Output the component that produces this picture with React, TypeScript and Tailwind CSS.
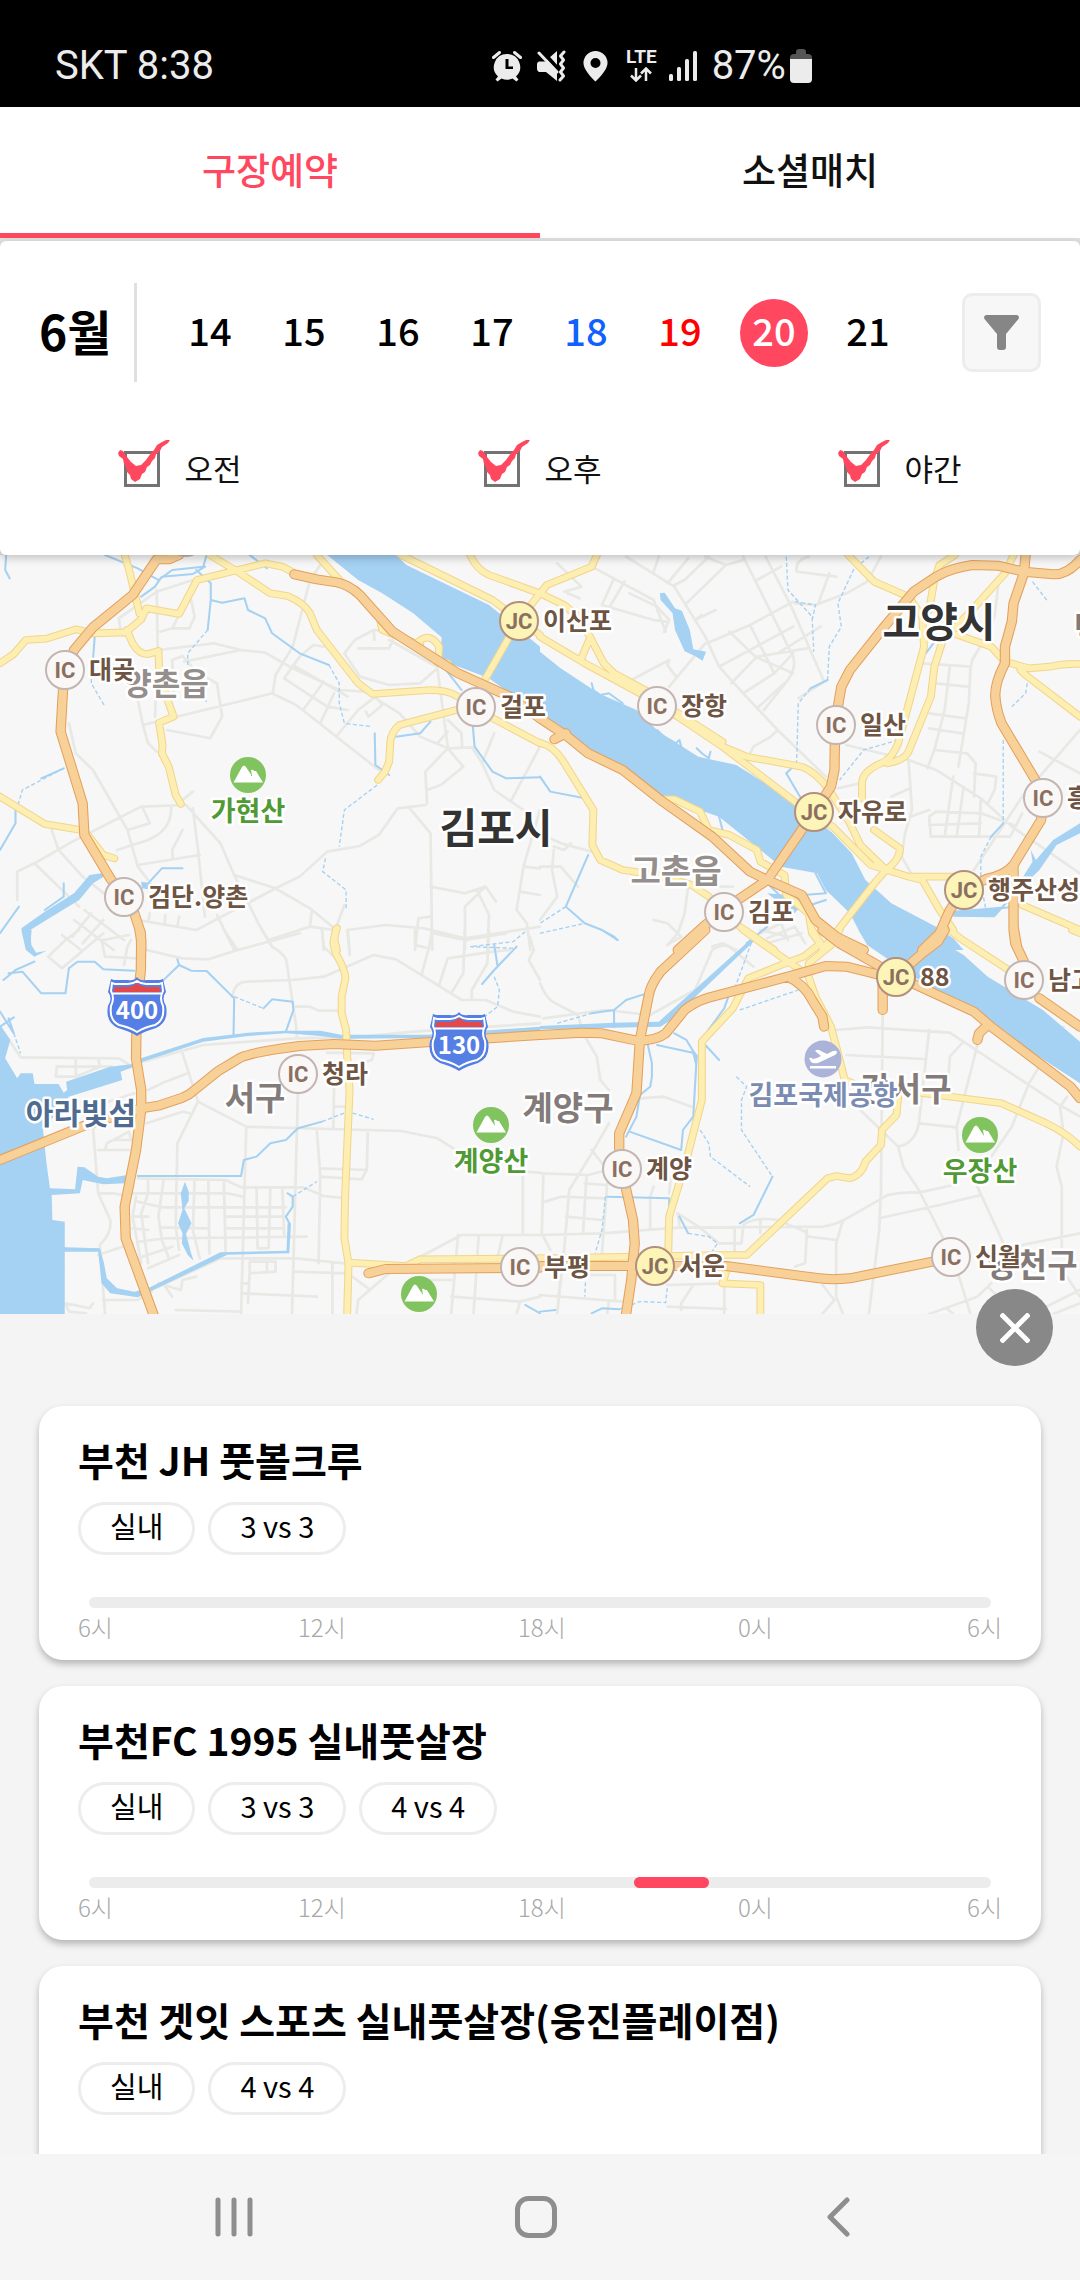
import { useState } from "react";

const dates = [
    { day: 14, color: "text-black" },
    { day: 15, color: "text-black" },
    { day: 16, color: "text-black" },
    { day: 17, color: "text-black" },
    { day: 18, color: "text-[#1161ff]" },
    { day: 19, color: "text-[#ff0000]" },
    { day: 20, color: "text-black" },
    { day: 21, color: "text-black" },
];

const periods = ["오전", "오후", "야간"];

const hours = ["6시", "12시", "18시", "0시"];

// slots are hours counted from 6 in the morning
const stadiums = [
    { id: 1, name: "부천 JH 풋볼크루", tags: ["실내", "3 vs 3"], slots: [] },
    {
        id: 2,
        name: "부천FC 1995 실내풋살장",
        tags: ["실내", "3 vs 3", "4 vs 4"],
        slots: [{ start: 14.5, end: 16.5 }],
    },
    {
        id: 3,
        name: "부천 겟잇 스포츠 실내풋살장(웅진플레이점)",
        tags: ["실내", "4 vs 4"],
        slots: [],
    },
];

// Map tiles, 1568 x 1200 units each
const tiles = [
    {
        transform: "translate(0 550) scale(0.3444 0.3333)",
        minor: "M930 45L900 90L850 290L800 375L792 430M415 525L790 430L860 465L1100 660M400 450L415 525L430 580L455 605M455 120L458 300L450 500M560 90L455 125L345 205L350 240M460 300L620 280L700 300L770 308L850 355L985 420L1060 425L1160 490L1220 560L1300 595L1370 592L1400 640L1435 720L1520 780M505 440L500 330L530 318L570 365L630 400L645 500L610 565L485 540M700 300L535 335M555 150L565 200L550 235L500 235L520 195M500 235L465 245M825 385L870 320L910 285L940 290M825 385L950 470L1010 480M850 345L1010 440M880 480L940 395M930 520L970 430M980 555L1040 480L1090 440L1110 465L1070 500L1062 485M1000 310L1030 270L1085 240L1130 245M1085 240L1087 270M1000 310L1045 380L1130 405L1220 400L1270 355L1300 590M1040 295L1130 295L1140 270M1130 270L1260 345M1300 510L1340 550L1342 590M1270 580L1300 545M200 520L220 610L270 660L370 840L400 950L430 990M50 1050L50 965L100 940L210 875L410 770L540 765L640 880L680 975L800 1015L900 1075L965 1130M100 940L230 1070M150 840L170 900L240 980L400 1110L570 1140L800 1015L870 980L950 905L1045 888L1100 855L1155 775L1235 765M1300 595L1235 665L1240 760M1300 595L1345 650L1280 705L1240 720M1190 775L1250 850L1255 1200M370 840L435 820L415 775M340 900L430 870Q500 840 497 770M400 945L580 915M560 775L575 900L595 1100M530 840L500 900L502 925M630 1095L680 1200M680 975L750 1120L790 1190M720 1060L800 1015M1010 1140L1120 1125L1230 1135L1350 1165L1568 1130M1485 750L1568 590M1400 640L1435 550M1250 1010L1350 1030L1410 1010L1440 1055M1350 1200L1350 1070L1410 1010M1385 1020L1420 1095L1415 1200M1568 780L1520 950L1500 1080L1530 1120L1540 1200M1520 950L1568 955M1510 1025L1568 1035M215 1110L330 1200M245 1080L360 1170M265 1090L210 1160M300 1110L240 1180M435 1090L430 1115M480 1095L478 1125M520 1100L515 1130M780 1170L900 1130L905 1085M900 1130L970 1140M1205 1200L1215 1105L1250 1100M530 750L560 725M935 1140L940 1200M1008 1140L1015 1200M1000 1065L975 1135",
        streams: "M305 15L400 55L460 90L500 60L590 50L600 15M410 140L450 110L470 80L560 72L595 50M570 60L612 100L612 150L645 158L710 145L720 180L770 205L790 250L870 310L955 345M612 150L603 240M275 260L270 330M185 655L120 685M0 900L45 820L45 770M1295 360L1340 420M1373 530L1378 590L1430 665L1470 685L1568 682M1088 550L1090 645L1130 675M1250 515L1220 550L1150 560M530 955L470 955L430 1000M55 1070L0 1150M185 1000L185 1040L130 1080M18 15L15 60L28 85M725 15L775 55",
        dashed: "M955 345L985 400L985 460L1000 520L1080 530M603 240L545 310L545 400L605 460M268 330L265 400L302 465M185 655L65 720L45 790M1095 705L1000 780L985 890M945 925L937 965L1005 1020L1005 1075M1490 1195L1365 1190",
        water: "M950 15L1150 15L1180 45L1420 165L1568 290L1568 490L1480 430L1420 385L1280 330L1282 262L1200 190L1110 130L1040 90ZM325 965L260 975L215 1030L130 1085L62 1135L78 1200L92 1200L88 1140L150 1100L230 1050L270 1000ZM410 995L440 1000L430 1018L412 1015Z",
        yellow: "M0 340L40 312L75 270L135 266L220 238L270 250L365 247L410 208L425 175L520 192L572 90L770 40L820 50L860 72M362 15L375 60L405 190M368 240L385 280Q405 315 430 312L460 303L462 355L480 430L504 500L462 518L472 585L470 610L490 650L510 735L525 762M610 15L690 65L785 130L835 138Q885 160 900 190L920 240L1040 400L1082 432L1250 420Q1300 420 1330 440L1385 480L1568 580M1325 480L1160 525Q1135 545 1133 580L1130 635L1118 665L1098 690M920 15L990 95M1165 15L1430 150L1568 255M1365 15Q1385 60 1420 75L1568 130M1568 130L1505 213L1410 385M1105 215L1110 240L1220 285M1215 275Q1250 245 1275 290L1272 340L1300 340M0 740L130 822L235 840M255 855L300 915L332 925M978 1135L970 1165L978 1200",
        orange: "M520 15L490 28L455 28L385 135L270 232L215 300L190 360L183 420L176 545L240 760L245 855L320 985L360 1040L390 1090L409 1150L410 1200M855 73L920 88L978 97Q1015 105 1045 135L1140 245L1330 370L1480 440L1568 505",
    },
    {
        transform: "translate(540 550) scale(0.3444 0.3333)",
        minor: "M160 55L330 150L365 245M250 20L390 110L480 260L520 350L590 430L690 540L830 680M390 105L420 90L490 20M425 160L540 45L590 30M450 210L510 180M330 65L345 20M370 100L430 25M480 20L540 45M590 20L735 320Q745 350 720 390L650 480M655 20L730 170L825 395L750 445M450 210L470 195M520 350L735 230M485 280L610 225L735 155M610 225L680 370M550 245L625 320L735 370M555 400L630 320L775 295M590 430L680 370L735 310M630 475L720 390M690 310L815 230M740 160L800 165L890 130L950 95L990 20M745 65Q740 30 780 20M745 65L860 80M810 155L840 70M630 90L700 50M375 410L480 280M265 390L375 330L370 345L395 380M70 125L120 110L50 40M80 130L115 145M180 165L215 85M200 175L245 95M180 165L330 210L365 215M260 130L340 170L375 210L360 245M690 540L670 560L620 590L610 610M890 585L1070 630L1150 660L1280 745L1370 830L1568 970M1070 630L1080 780L1060 850L1050 920L1080 975M1110 340L1250 350L1245 460L1215 650M1330 110L1320 200L1300 250L1255 330L1250 355M1190 350L1175 480L1145 600L1240 610L1265 640L1260 740M1150 400L1240 410M1130 490L1235 505M1130 535L1225 550M1145 600L1125 655M1260 670L1325 680L1320 720L1300 760M1150 785L1130 800L1135 860L1365 860L1400 790M1200 680L1175 860M1230 710L1210 860M1130 825L1280 820M1280 745L1275 860M1150 785L1280 790L1375 825M1450 605L1568 670M1400 740L1568 540M1400 740L1260 960M865 715L930 700M1075 800L1130 780M1020 740L1075 715M0 850L60 880L150 905M40 900L35 960L50 1040L0 1110M40 890L70 900L90 880M0 950L60 950L110 1010M330 1110L370 1120L410 1160L370 1185M430 1010L420 1090L400 1150M430 1010L560 1010M500 1190L530 1180L570 1200M640 1150L700 1120L720 1170M660 1165L740 1130L770 1180",
        streams: "M835 390L785 415M755 740L715 670L745 640M140 915L75 1070M75 1070L130 1120L180 1140L225 1170M0 680L30 725L130 745M1345 820L1310 860M1150 270L1120 310M150 400L155 420L175 435L200 430L240 460M340 540L360 560L395 580L405 570L410 590M455 595L470 610L490 625L495 605M520 800L530 840M660 1000L740 1080L830 1050M700 1040L830 1030M600 1180L660 1130M830 1030L800 970M1295 1080L1380 1070",
        dashed: "M715 20L720 120L790 200L795 305M740 155L800 165L790 210M955 20L910 60L865 160L875 230L840 290L835 390M785 415L750 460L745 640M1040 570L940 600L870 690M1345 570L1345 820M1310 860L1280 920L1280 1000L1295 1080M1415 400L1410 430L1370 470M1430 95L1475 155M0 1150L130 1120M75 1070L0 1120",
        water: "M0 305L60 355L170 430L280 480L345 545L460 620L570 645L745 760L850 850L905 910L945 990L1020 1060L1150 1130L1200 1165L1230 1200L980 1200L930 1150L900 1090L830 1020L805 970L700 950L640 900L520 800L350 740L250 655L150 600L0 490ZM348 130L362 128L392 175L412 182L435 240L445 298L482 305L472 332L450 318L420 304L392 240L385 190L350 150ZM1568 820L1490 870L1440 930L1425 900L1430 935L1400 985L1340 1070L1200 1082L1200 1100L1320 1102L1400 1010L1450 960L1500 885L1568 850ZM660 1030L770 1040L740 1090L715 1075Z",
        yellow: "M165 15L150 50L20 105L0 130L70 165L105 195L145 260L185 340L215 370L340 440M145 265L120 325M0 260L130 340L290 430L400 500L530 590L600 620L760 650Q800 665 840 720L900 820L930 885L1000 955M530 590L740 755L850 830L960 945L1070 980L1200 980M340 450L530 575M1070 980L1110 990L1160 1080L1200 1140M895 15L970 95L1070 140L1110 200L1115 290L1040 580Q1020 630 990 640Q935 665 935 700L935 745M1205 15L1160 45L1145 90L1130 180M1375 15L1350 70L1250 185L1170 270L1145 350L1135 440L1070 605Q1060 630 1010 640M1200 250L1310 290L1350 335L1420 355L1480 350Q1520 340 1568 342M1395 360L1410 375L1568 500M970 840L1045 895Q1045 930 1005 960L975 995L850 1160L820 1200M350 748L390 748L465 785L490 840L550 855L630 900L640 935L710 975L715 1035L780 1090L790 1150L820 1190M0 578Q40 590 65 630L155 780L152 885L175 930L240 960L340 975L440 1005L490 1040M580 1130L680 1200M1400 1065L1568 1140",
        orange: "M0 505L80 560L140 610L240 660L350 750L500 860L610 965L660 990L760 1035L800 1110L860 1160L940 1200M75 550L42 568M1568 30Q1530 75 1490 73L1405 65L1330 47L1255 45Q1190 55 1150 80L1085 125L1000 230L900 360L875 410L865 470L857 525L855 660L845 710L795 787L660 990L560 1060L480 1125L400 1200M1410 15L1405 70L1375 160L1370 215L1350 290L1350 340Q1320 400 1322 440Q1325 480 1340 520L1450 710L1460 745L1455 810L1375 945Q1350 975 1300 985L1230 1020L1190 1080L1160 1150L1110 1200M1375 945L1375 1130L1385 1190",
    },
    {
        transform: "translate(0 930) scale(0.3444 0.3333)",
        minor: "M425 60L530 85L605 88L690 60L870 10M650 0L690 60M760 0L790 50Q830 75 832 95L860 290L862 320M675 200Q680 155 720 155L850 150L940 140L1085 75L1150 88L1340 210L1410 210L1490 245L1568 260M415 395L590 345L860 325L1000 322M1000 325L1200 305L1568 280M0 290L60 382L345 385L385 410M165 410L325 410M165 410L162 440L220 440L290 410L285 385M220 440L220 385M300 520L390 490M530 370L575 515L715 590L1165 603L1270 625L1340 670M430 480L480 455L545 430M425 580L530 545L550 550M575 515L515 640L510 890L520 960M715 590L700 1152M865 490L848 1152M920 600L930 735L925 1000M970 470L968 595M970 530L1010 530M1068 600L1065 720L930 715M1065 720L1050 748L930 740M950 368L1085 370L1080 390L1060 395M860 230L900 230L925 242L980 242M400 745L655 750L700 772L880 772L940 798L1005 805M385 790L560 790L660 790L705 800M400 815L470 832L830 832M385 860L430 860M655 860L820 860M385 895L430 900M465 892L600 895M655 895L820 895M405 935L480 925L890 920M400 985L500 950M430 1015L520 975M430 750L430 790L410 850L430 1000M395 800L385 860L410 1000M475 750L460 860L470 930L490 985M565 750L560 900L580 985M605 750L608 970M650 750L655 965M745 775L748 955L780 955L785 775M820 775L825 915M430 1085L640 985L860 985L1000 1000M285 790L320 870Q325 910 290 945L305 1152M285 975L385 940M270 590L285 790L330 790L380 800M285 660L380 660M305 660L310 640L375 605L380 630L330 630M190 1120L260 1135L270 1120M190 1120L200 1145L250 1150M300 1110L400 1110L440 1085M725 995L800 995L800 1025L725 1030ZM725 1030L720 1120M700 1060L720 1060M775 995L775 1028M700 1090L920 1100M850 1025L1010 1030L1075 1080M965 1000L965 1152M1035 1152L1040 1110L1130 1030L1340 915L1568 915M1330 915L1310 1152M1390 915L1375 1152M1460 915L1445 980M1240 1050L1310 1050M1310 1100L1510 1115L1568 1100M1510 1115L1500 1152M1518 740L1518 910M1518 725L1568 728M510 1140L700 1145M480 1070L500 1100M460 1060L525 1080L530 1050L570 1040M140 80L190 30L230 0M140 80L180 115L300 10M180 15L235 60M295 30L305 80L400 85M360 105L370 50L380 30M300 30L375 15M1205 0L1205 45L1245 55M1255 0L1245 55L1225 130M1300 85L1275 165M1300 85L1430 65L1480 60M1350 0L1345 130L1310 190M1420 0L1415 100L1370 180L1370 210M1260 10L1350 30L1470 10M1538 20L1550 60L1535 90L1568 150M935 0L940 50L975 85M1010 0L1015 75",
        streams: "M10 150L45 120L100 95M25 130L65 125L120 190L190 190L200 115L225 95L275 95L300 118L390 122M470 155L520 105L515 88M520 105L555 122L600 123L680 205L678 315M830 305L852 240L850 215L790 208L765 235M400 738L700 738L708 690L745 680L785 640L830 630L865 595L935 575M1500 50L1435 120L1400 162M1435 45L1445 110M835 790L850 800L850 830L830 860L840 880M0 245L40 310L25 265M0 290L40 262M1525 1125L1568 1150M1085 0",
        dashed: "M680 200L765 235M935 575L1010 545L1085 568M1525 5L1490 35L1365 50M1435 140L1450 180L1445 230L1400 265M850 800L920 755M40 310L60 370",
        water: "M0 285L30 330L15 385L50 445L60 430L95 430L100 462L170 462L185 488L195 480L192 455L320 410L385 402L385 412L350 425L355 450L200 500L125 600L135 700L145 775L218 778L225 710L245 712L285 740L310 745L370 735L365 760L300 763L240 750L232 790L150 795L152 870L188 875L188 952L290 955L302 1000L310 1045L340 1075L390 1085L430 1075L640 967L832 962L835 880L845 880L840 970L660 974L440 1082L400 1102L320 1090L295 1060L285 965L188 965L188 1152L0 1152ZM62 0L75 60L100 80L135 62L105 68L88 40L92 0ZM537 755L548 785L548 812L535 835L556 880L540 912L555 970L562 992L545 975L528 940L530 910L517 880L530 840L525 790ZM385 405L590 335L720 318L830 310L860 312L930 318L990 326L1240 324L1568 303L1568 290L1240 314L990 314L930 302L830 302L720 308L590 324L385 393Z",
        yellow: "M975 0L968 40L975 70Q1003 120 1003 145L992 200L992 250L1005 300L1008 380L1015 480L1002 800L1000 925L1012 1000L1008 1152M1012 998L1180 1008L1220 988L1568 985",
        orange: "M405 0L410 30L409 120L397 230L395 385L410 480L410 540L395 660L362 830L365 925L445 1152M410 535L460 527L530 503Q550 495 565 480L635 422L700 382Q740 365 870 348L970 342L1090 347L1240 337L1568 315M0 690L250 585L330 560L410 535M1070 1030L1120 1017L1568 1013",
    },
    {
        transform: "translate(540 930) scale(0.3444 0.3333)",
        minor: "M0 160Q20 210 45 220L110 255L125 310L165 380L175 450L200 480M10 265L190 240L320 255L450 180L500 60Q530 40 550 50L620 110M0 310L120 290M200 580L150 670L85 780L70 960L50 1152M0 730L140 735L195 720M10 730L5 910L30 960M15 815L60 800L190 805M75 860L180 870M135 740L125 910M195 760L180 970M0 915L180 910L400 893L820 890Q860 885 900 860L1010 795Q1050 785 1100 788L1200 765M290 505L360 500L440 530M130 760L190 765M330 770L320 800L320 895M380 740L375 790M150 660L180 700M860 300L950 292L1190 308L1500 520L1568 560M890 375L1115 387M1130 300L1100 580Q1090 640 1040 650M995 250L990 780L985 900L955 1152M1270 345L1210 590L1215 660M1100 580L1210 592M1225 340L1190 380L1185 455M1520 290L1420 460L1370 590L1310 680M930 540L1040 650L1055 710L1100 780L1200 985L1250 1152M1270 770L1350 950M985 865L1160 825L1280 795L1270 770M1510 530L1530 500M1510 530L1520 610L1500 710L1515 770L1515 950M1400 945L1568 910M1130 1152L1270 1100L1310 1060M1180 1135L1200 1152M1300 1070L1340 1110M880 870L860 940L860 1100L880 1152M775 900L770 1000L740 1010M780 920L860 930M820 1065L855 1110L820 1152M590 890L585 940L520 940L460 890L400 850L405 885M565 895L565 970M590 885Q620 860 690 870L770 905L780 920M640 870L640 910M370 1065L540 1060M445 1065L410 1120L410 1140M535 1060L535 1152M370 1130L540 1137M0 1095L240 1115M130 1035L218 1035L218 1110M200 1115L195 1152M60 1035L50 1152M1470 1130L1568 1080M1490 1152L1568 1120M1530 1040L1568 1100M370 45L400 10M640 0L720 20M660 40L760 10",
        streams: "M310 330L325 400L325 440L320 470L290 495L280 560L250 620M390 310L425 330L455 380M455 380L445 560L415 600L410 660L260 605M340 345L450 370M550 190L535 235L475 320M480 345L520 390M215 290L215 240L250 210L310 190M215 240L150 250M195 800L375 805L375 830M150 1150L180 1135L230 1138M405 860L430 910M675 740L620 855L580 880M0 1145L45 1140M180 0L215 20L225 30",
        dashed: "M50 280L150 250M580 240L750 180M570 440L600 470L585 510L585 600L675 740M465 600L490 640L495 680L610 770M190 800L180 900L160 970M135 1000L130 1100M430 910L490 920L515 940L500 965M230 1138L290 1115L365 1118L370 1070M620 20L585 120L560 190",
        water: "M925 0L1100 0L1165 35L1230 75L1300 140L1460 240L1568 335L1568 460L1300 280L1100 150L1000 80L950 45ZM620 20L635 20L380 270L350 290L215 293L0 298L0 288L215 278L345 275ZM440 360L458 375L452 410Z",
        yellow: "M590 0L700 80L770 130M870 0L845 45L780 100L780 140L800 200L845 290L885 450L920 465L1040 480L1340 520L1470 580Q1530 610 1568 650M790 0L815 40L765 80L700 105L605 145L560 235L470 335L470 510L425 690L375 860L372 980M1040 500L1035 555L993 600L990 645L945 695Q935 735 900 745L860 738L835 745L600 975L520 975L0 985M545 1010L530 1060L640 1065L640 1152M1190 0L1220 25L1405 150L1450 205M1545 0L1568 10",
        orange: "M480 0L350 125Q320 165 315 200L290 330L280 490L230 610L230 660L237 717L270 870L275 940L265 1050L250 1152M0 315L120 308L180 310L285 333Q340 330 365 310L420 240Q450 215 490 203L720 140L830 108L890 110L980 133M720 140Q770 165 790 210L820 260L825 290M820 0L870 40L980 105L1035 138L1260 245L1310 290L1540 470L1568 505M1300 285L1275 310L1270 330M1035 138L1110 70L1155 35L1175 0M995 150L995 240M1375 0L1380 40L1405 95M1450 205L1568 290M0 1008L540 1008L810 1045Q850 1050 900 1045L1140 995",
    },
];

const layers = [
    { key: "minor", color: "#e8e8e4", width: 8, dash: undefined },
    { key: "streams", color: "#a5d1f2", width: 6, dash: undefined },
    { key: "dashed", color: "#a5d1f2", width: 4, dash: "12 7" },
    { key: "water", color: "#a5d1f2", width: 0, dash: undefined },
    { key: "yellow", color: "#f3d48c", width: 23, dash: undefined },
    { key: "yellow", color: "#fdeeb2", width: 17, dash: undefined },
    { key: "orange", color: "#e3a05c", width: 30, dash: undefined },
    { key: "orange", color: "#f8d199", width: 24, dash: undefined },
] as const;

const places = [
    { name: "양촌읍", x: 166, y: 695, size: "text-[31px]", color: "fill-[#948e8d]" },
    { name: "고양시", x: 939, y: 637, size: "text-[41px]", color: "fill-[#333333]" },
    { name: "김포시", x: 496, y: 843, size: "text-[41px]", color: "fill-[#333333]" },
    { name: "고촌읍", x: 676, y: 883, size: "text-[33px]", color: "fill-[#948e8d]" },
    { name: "서구", x: 255, y: 1110, size: "text-[33px]", color: "fill-[#837b7a]" },
    { name: "계양구", x: 568, y: 1120, size: "text-[33px]", color: "fill-[#837b7a]" },
    { name: "강서구", x: 906, y: 1101, size: "text-[33px]", color: "fill-[#837b7a]" },
    { name: "양천구", x: 1032, y: 1277, size: "text-[33px]", color: "fill-[#837b7a]" },
    { name: "덕양구", x: 1119, y: 640, size: "text-[33px]", color: "fill-[#837b7a]" },
    { name: "아라빛섬", x: 81, y: 1124, size: "text-[30px]", color: "fill-[#4f6c90]" },
    { name: "김포국제공항", x: 823, y: 1105, size: "text-[27px]", color: "fill-[#7b8cb3]" },
    { name: "가현산", x: 248, y: 821, size: "text-[27px]", color: "fill-[#4f9a35]" },
    { name: "계양산", x: 491, y: 1171, size: "text-[27px]", color: "fill-[#4f9a35]" },
    { name: "우장산", x: 980, y: 1181, size: "text-[27px]", color: "fill-[#4f9a35]" },
];

const junctions = [
    { type: "IC", name: "", x: 186, y: 537 },
    { type: "IC", name: "대곶", x: 65, y: 670 },
    { type: "JC", name: "이산포", x: 519, y: 621 },
    { type: "IC", name: "걸포", x: 476, y: 707 },
    { type: "IC", name: "장항", x: 657, y: 706 },
    { type: "IC", name: "일산", x: 836, y: 725 },
    { type: "JC", name: "자유로", x: 814, y: 812 },
    { type: "IC", name: "흥도", x: 1043, y: 798 },
    { type: "JC", name: "행주산성", x: 964, y: 890 },
    { type: "IC", name: "검단.양촌", x: 124, y: 897 },
    { type: "IC", name: "김포", x: 724, y: 912 },
    { type: "JC", name: "88", x: 896, y: 977 },
    { type: "IC", name: "남고양", x: 1024, y: 980 },
    { type: "IC", name: "청라", x: 298, y: 1074 },
    { type: "IC", name: "계양", x: 622, y: 1169 },
    { type: "IC", name: "부평", x: 520, y: 1267 },
    { type: "JC", name: "서운", x: 655, y: 1266 },
    { type: "IC", name: "신월", x: 951, y: 1257 },
];

const mountains = [
    { x: 248, y: 775 },
    { x: 491, y: 1125 },
    { x: 980, y: 1135 },
    { x: 419, y: 1294 },
];

const shields = [
    { no: "400", x: 137, y: 1006 },
    { no: "130", x: 459, y: 1041 },
];

function StatusBar() {
    return (
        <header className="flex h-[107px] shrink-0 items-center bg-black pt-6 font-[Roboto,sans-serif] text-[40px] leading-none text-[#ececec]">
            <span className="w-[45%] pl-[55px]">SKT 8:38</span>

            <div className="flex items-center pl-[6px]">
                <svg width="30" height="32" viewBox="0 0 30 32" fill="#ececec">
                    <path
                        fillRule="evenodd"
                        d="M15 4a13 13 0 0 1 9 22.500l2.500 3-2 2-4-3a13 13 0 0 1-11 0l-4 3-2-2 2.500-3A13 13 0 0 1 15 4zM13.500 9v10h7.500v-2.500h-4.500V9z"
                    />
                    <path d="M1.500 7.500l6-5M28.500 7.500l-6-5" stroke="#ececec" strokeWidth="3" strokeLinecap="round" />
                </svg>
                <svg className="ml-[14px]" width="31" height="32" viewBox="0 0 31 32" fill="#ececec">
                    <path d="M3 11.500h6L21 1v30L10 22H3q-2-1-2-3v-5q0-2 2-2.500z" />
                    <path d="M5 0l19 21" stroke="#000" strokeWidth="4" />
                    <path
                        d="M3 3l18 19M28 2l-3.500 4 3 4-3 4 3 4-3 4 3 4-3.500 4"
                        fill="none"
                        stroke="#ececec"
                        strokeWidth="3"
                        strokeLinecap="round"
                        strokeLinejoin="round"
                    />
                </svg>
                <svg className="ml-4" width="25" height="32" viewBox="0 0 25 32" fill="#ececec">
                    <path
                        fillRule="evenodd"
                        d="M12.500 1a12 12 0 0 1 12 12c0 8-12 18.500-12 18.500S.5 21 .5 13a12 12 0 0 1 12-12zm0 7a5 5 0 1 0 0 10 5 5 0 0 0 0-10z"
                    />
                </svg>
                <div className="ml-[18px] flex flex-col items-center gap-[2px]">
                    <span className="text-[19px] leading-[16px] font-bold">LTE</span>
                    <svg width="24" height="15" viewBox="0 0 24 15" fill="none" stroke="#ececec" strokeWidth="2.500">
                        <path d="M7 1v12M2 8.500l5 5 5-5M17 14V2M12 6.500l5-5 5 5" />
                    </svg>
                </div>
                <svg className="ml-[11px]" width="30" height="32" viewBox="0 0 30 32" fill="#ececec">
                    <rect x="1" y="24" width="4" height="7" rx="1.500" />
                    <rect x="9" y="17" width="4" height="14" rx="1.500" />
                    <rect x="17" y="9" width="4" height="22" rx="1.500" />
                    <rect x="25" y="1" width="4" height="30" rx="1.500" />
                </svg>
                <span className="ml-[14px]">87%</span>
                <svg className="ml-[4px]" width="22" height="34" viewBox="0 0 22 34">
                    <path d="M0 9q0-4 4-4h2V3q0-3 3-3h4q3 0 3 3v2h2q4 0 4 4v3H0z" fill="#555" />
                    <path d="M0 10h22v20q0 4-4 4H4q-4 0-4-4z" fill="#ececec" />
                </svg>
            </div>
        </header>
    );
}

function Tabs() {
    return (
        <nav className="flex shrink-0 border-b-[3px] border-[#e0e0e0] bg-white text-[37px] font-medium">
            <button className="h-[131px] flex-1 border-b-[5px] border-[#ff475f] text-[#ff475f]">
                구장예약
            </button>
            <button className="h-[131px] flex-1 border-b-[5px] border-white text-[#111]">
                소셜매치
            </button>
        </nav>
    );
}

function FilterPanel() {
    const [selected, setSelected] = useState(20);

    return (
        <div className="relative z-10 shrink-0">
            <section className="rounded-md bg-white pt-[42px] pb-[62px] shadow-[0_3px_8px_rgba(0,0,0,0.22)]">
                {/* Dates */}
                <div className="flex h-[99px] items-center px-[39px]">
                    <h1 className="flex h-full w-[98px] items-center border-r-[3px] border-[#e0e0e0] pb-[6px] text-[48px] leading-none font-bold">
                        6월
                    </h1>
                    <div className="mr-[47px] ml-[26px] grid flex-1 grid-cols-8 justify-items-center">
                        {dates.map(({ day, color }) => (
                            <button
                                key={day}
                                onClick={() => setSelected(day)}
                                className={`size-[68px] rounded-full pb-[6px] text-[38px] leading-none font-medium ${
                                    day === selected ? "bg-[#ff475f] text-white" : color
                                }`}
                            >
                                {day}
                            </button>
                        ))}
                    </div>
                    <button
                        aria-label="필터"
                        className="grid size-[79px] place-items-center rounded-[10px] border-[3px] border-[#ededed] bg-[#f7f7f7]"
                    >
                        <svg width="35" height="35" viewBox="0 0 35 35" fill="#868686">
                            <path d="M2 0h31q3 1 1.500 4L22 19v13q0 3-3 3h-3q-3 0-3-3V19L.5 4Q-1 1 2 0z" />
                        </svg>
                    </button>
                </div>

                {/* Time of day */}
                <div className="mt-[63px] grid grid-cols-3">
                    {periods.map((period) => (
                        <label
                            key={period}
                            className="flex h-12 items-center justify-center gap-[14px] text-[31px] text-[#111]"
                        >
                            <span className="relative flex w-[52px] pl-[6px]">
                                <input
                                    type="checkbox"
                                    defaultChecked
                                    className="peer size-9 appearance-none border-[3px] border-[#737373]"
                                />
                                <svg
                                    className="absolute -top-3 left-0 hidden peer-checked:block"
                                    width="52"
                                    height="44"
                                    viewBox="0 0 52 44"
                                    fill="#ff475f"
                                >
                                    <path d="M0 14L2 11L5 12L9 18L13 23L18 27L23 26L28 21L33 14L36 11L39 6L44 3L48 1L52 1L50 4L44 8L42 12L38 15L37 19L34 22L32 26L29 28L27 33L24 35L22 40L17 43L13 40L12 36L9 33L8 28L6 25L5 20L1 17Z" />
                                </svg>
                            </span>
                            <span className="pb-[2px]">{period}</span>
                        </label>
                    ))}
                </div>
            </section>
        </div>
    );
}

function MapView() {
    return (
        <svg
            className="min-h-0 w-full flex-[759_1_0%] bg-[#f7f7f7]"
            viewBox="0 555 1080 759"
            preserveAspectRatio="xMidYMid slice"
        >
            {layers.map(({ key, color, width, dash }, i) => (
                <g
                    key={i}
                    fill={key === "water" ? color : "none"}
                    stroke={key === "water" ? "none" : color}
                    strokeWidth={width}
                    strokeDasharray={dash}
                    strokeLinecap={dash ? "butt" : "round"}
                    strokeLinejoin="round"
                >
                    {tiles.map((tile) => (
                        <path key={tile.transform} transform={tile.transform} d={tile[key]} />
                    ))}
                </g>
            ))}

            <g className="font-bold" stroke="#fff" strokeWidth="5" strokeLinejoin="round" paintOrder="stroke" textAnchor="middle">
                {places.map(({ name, x, y, size, color }) => (
                    <text key={name} x={x} y={y} className={`${size} ${color}`}>
                        {name}
                    </text>
                ))}
            </g>

            {mountains.map(({ x, y }) => (
                <g key={`${x}-${y}`} transform={`translate(${x} ${y})`}>
                    <circle r="18" fill="#80c35f" />
                    <path d="M-14.500 7.500L-6-8q2-3 4 0L4 1 3-5q2-1 3 1h2L15 7.500z" fill="#fff" />
                </g>
            ))}

            {/* Airport */}
            <g transform="translate(823 1059)">
                <circle r="18.500" fill="#abb3d8" />
                <path d="M-13 7h26v2.500h-26zM-14-1q2-1 4 1l4-1 4-2-6-5q2-2 4-1l8 4 6-3q4-1 4 1 0 2-2 3L-5 4q-5 1-7-1z" fill="#fff" />
            </g>

            {shields.map(({ no, x, y }) => (
                <g key={no} transform={`translate(${x} ${y})`}>
                    <path
                        d="M0-29q3 4 9 3h14l3-1 3 13q-5 6 0 14 3 16-10 22-11 3-19 8-8-5-19-8-13-6-10-22 5-8 0-14l3-13 3 1h14q6 1 9-3z"
                        fill="#557fe4"
                    />
                    <path
                        d="M0-25q4 3 9 3h13l3-1 1 8q-4 7 0 15 2 14-8 19-10 2-18 7-8-5-18-7-10-5-8-19 4-8 0-15l1-8 3 1h13q5 0 9-3z"
                        fill="#557fe4"
                        stroke="#fff"
                        strokeWidth="2"
                    />
                    <path d="M-22-19h12q6 0 10-4 4 4 10 4h12l2 5h-48z" fill="#e54848" />
                    <path d="M-24-12.500h48" stroke="#fff" strokeWidth="2" />
                    <text y="13" textAnchor="middle" fill="#fff" className="text-[24px] font-bold">
                        {no}
                    </text>
                </g>
            ))}

            {junctions.map(({ type, name, x, y }) => (
                <g key={`${x}-${y}`}>
                    <circle
                        cx={x}
                        cy={y}
                        r="19"
                        fill={type === "JC" ? "#fdf4b8" : "#faf8f7"}
                        stroke={type === "JC" ? "#b3907c" : "#c3b5b1"}
                        strokeWidth="2"
                    />
                    <text
                        x={x}
                        y={y + 8}
                        textAnchor="middle"
                        fill="#8b6f60"
                        className="font-[Roboto,sans-serif] text-[22px] font-bold"
                    >
                        {type}
                    </text>
                    <text
                        x={x + 24}
                        y={y + 9}
                        fill="#6d5443"
                        stroke="#fff"
                        strokeWidth="5"
                        strokeLinejoin="round"
                        paintOrder="stroke"
                        className="text-[25px] font-bold"
                    >
                        {name}
                    </text>
                </g>
            ))}
        </svg>
    );
}

function StadiumCard({ name, tags, slots }: (typeof stadiums)[number]) {
    return (
        <li className="shrink-0 rounded-3xl bg-white px-[39px] pt-6 pb-4 shadow-[0_4px_7px_rgba(0,0,0,0.26)]">
            <h2 className="text-[39px] leading-[58px] font-bold">{name}</h2>

            <div className="mt-[14px] flex gap-[13px]">
                {tags.map((tag) => (
                    <span
                        key={tag}
                        className="flex h-[53px] items-center rounded-full border-[3px] border-[#ededed] px-[29px] pb-[6px] text-[29px]"
                    >
                        {tag}
                    </span>
                ))}
            </div>

            {/* Open slots */}
            <div className="relative mx-[11px] mt-[42px] h-[11px] rounded-full bg-[#ececec]">
                {slots.map(({ start, end }) => (
                    <div
                        key={start}
                        className="absolute h-full rounded-full bg-[#ff475f]"
                        style={{
                            left: `${(start / 24) * 100}%`,
                            width: `${((end - start) / 24) * 100}%`,
                        }}
                    />
                ))}
            </div>
            <div className="mt-[3px] mb-px flex text-[24px] leading-[32px] font-light text-[#a8a8a8]">
                {hours.map((hour) => (
                    <span key={hour} className="flex-1">
                        {hour}
                    </span>
                ))}
                <span className="w-11 text-right">6시</span>
            </div>
        </li>
    );
}

function StadiumList() {
    return (
        <section className="relative min-h-0 flex-[840_1_0%] bg-[#f4f4f4]">
            <button
                aria-label="닫기"
                className="absolute -top-[25px] right-[27px] z-10 grid size-[77px] place-items-center rounded-full bg-[#888888]"
            >
                <svg width="30" height="30" viewBox="0 0 30 30" stroke="#fff" strokeWidth="5">
                    <path d="M1 1l28 28M29 1L1 29" />
                </svg>
            </button>
            <ul className="flex h-full flex-col gap-[26px] overflow-hidden px-[39px] pt-[92px]">
                {stadiums.map((stadium) => (
                    <StadiumCard key={stadium.id} {...stadium} />
                ))}
            </ul>
        </section>
    );
}

function NavigationBar() {
    return (
        <footer className="flex h-[126px] shrink-0 items-center justify-center bg-[#f5f5f5] pr-2">
            <button aria-label="최근 앱" className="grid h-full w-[302px] place-items-center">
                <svg width="40" height="42" viewBox="0 0 40 42" stroke="#8e8e8e" strokeWidth="5" strokeLinecap="round">
                    <path d="M4 4v34M20 4v34M36 4v34" />
                </svg>
            </button>
            <button aria-label="홈" className="grid h-full w-[302px] place-items-center">
                <svg width="42" height="42" viewBox="0 0 42 42" fill="none" stroke="#8e8e8e" strokeWidth="5">
                    <rect x="2.500" y="2.500" width="37" height="37" rx="11" />
                </svg>
            </button>
            <button aria-label="뒤로" className="grid h-full w-[302px] place-items-center">
                <svg width="24" height="42" viewBox="0 0 24 42" fill="none" stroke="#8e8e8e" strokeWidth="5" strokeLinecap="round" strokeLinejoin="round">
                    <path d="M21 4L4 21l17 17" />
                </svg>
            </button>
        </footer>
    );
}

export default function App() {
    return (
        <div className="flex h-screen flex-col overflow-hidden bg-[#e0e0e0] font-['Noto_Sans_CJK_KR',sans-serif] text-black">
            <StatusBar />
            <Tabs />
            <FilterPanel />
            <MapView />
            <StadiumList />
            <NavigationBar />
        </div>
    );
}
